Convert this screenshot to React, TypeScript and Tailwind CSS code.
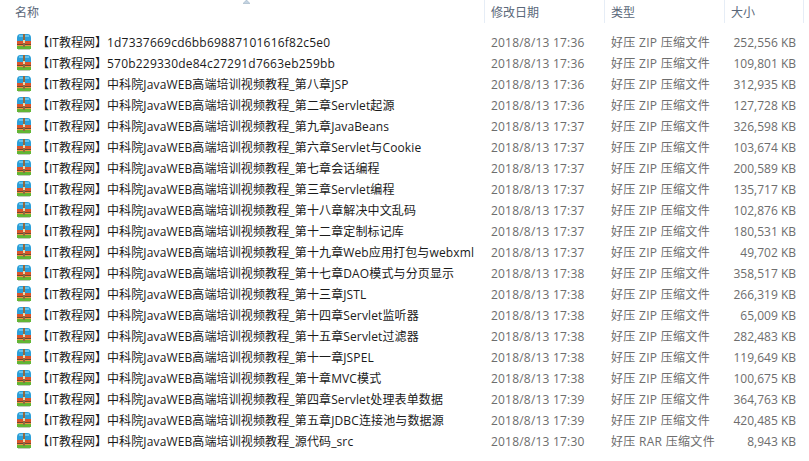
import React from "react";

interface FileRow {
  name: string;
  date: string;
  type: string;
  size: string;
  hash?: boolean;
}

const course = "中科院JavaWEB高端培训视频教程_";
const zip = "好压 ZIP 压缩文件";

const files: FileRow[] = [
  { name: "1d7337669cd6bb69887101616f82c5e0", date: "2018/8/13 17:36", type: zip, size: "252,556 KB", hash: true },
  { name: "570b229330de84c27291d7663eb259bb", date: "2018/8/13 17:36", type: zip, size: "109,801 KB", hash: true },
  { name: course + "第八章JSP", date: "2018/8/13 17:36", type: zip, size: "312,935 KB" },
  { name: course + "第二章Servlet起源", date: "2018/8/13 17:36", type: zip, size: "127,728 KB" },
  { name: course + "第九章JavaBeans", date: "2018/8/13 17:37", type: zip, size: "326,598 KB" },
  { name: course + "第六章Servlet与Cookie", date: "2018/8/13 17:37", type: zip, size: "103,674 KB" },
  { name: course + "第七章会话编程", date: "2018/8/13 17:37", type: zip, size: "200,589 KB" },
  { name: course + "第三章Servlet编程", date: "2018/8/13 17:37", type: zip, size: "135,717 KB" },
  { name: course + "第十八章解决中文乱码", date: "2018/8/13 17:37", type: zip, size: "102,876 KB" },
  { name: course + "第十二章定制标记库", date: "2018/8/13 17:37", type: zip, size: "180,531 KB" },
  { name: course + "第十九章Web应用打包与webxml", date: "2018/8/13 17:37", type: zip, size: "49,702 KB" },
  { name: course + "第十七章DAO模式与分页显示", date: "2018/8/13 17:38", type: zip, size: "358,517 KB" },
  { name: course + "第十三章JSTL", date: "2018/8/13 17:38", type: zip, size: "266,319 KB" },
  { name: course + "第十四章Servlet监听器", date: "2018/8/13 17:38", type: zip, size: "65,009 KB" },
  { name: course + "第十五章Servlet过滤器", date: "2018/8/13 17:38", type: zip, size: "282,483 KB" },
  { name: course + "第十一章JSPEL", date: "2018/8/13 17:38", type: zip, size: "119,649 KB" },
  { name: course + "第十章MVC模式", date: "2018/8/13 17:38", type: zip, size: "100,675 KB" },
  { name: course + "第四章Servlet处理表单数据", date: "2018/8/13 17:39", type: zip, size: "364,763 KB" },
  { name: course + "第五章JDBC连接池与数据源", date: "2018/8/13 17:39", type: zip, size: "420,485 KB" },
  { name: course + "源代码_src", date: "2018/8/13 17:30", type: "好压 RAR 压缩文件", size: "8,943 KB" },
];

const ArchiveIcon = () => (
  <svg width="16" height="16" viewBox="0 0 16 16" className="-mt-px shrink-0">
    {/* top flap */}
    <path d="M1 4 Q1 0 4.5 0 H11.5 Q15 0 15 4 V7 H1 Z" fill="#2b9fd8" />
    <rect x="3" y="1" width="10" height="2" fill="#66c3ec" />
    {/* books */}
    <rect x="1" y="7" width="14" height="3" fill="#d9542b" />
    <rect x="1" y="10" width="14" height="1" fill="#6e4a30" />
    <rect x="1" y="11" width="14" height="1" fill="#ec9340" />
    <rect x="1" y="12" width="14" height="3" fill="#62b534" />
    <rect x="2" y="15" width="12" height="1" fill="#c3cdbd" />
    {/* strap */}
    <rect x="7" y="0" width="2" height="13" fill="#8f6a42" />
    <rect x="7" y="6" width="2" height="3" fill="#e9d9a8" />
  </svg>
);

export default function App() {
  return (
    <div className="relative h-[461px] w-[809px] overflow-hidden bg-white font-['Open_Sans','Noto_Sans_CJK_SC',sans-serif] text-[12px] text-[#6d6d6d]">
      {/* sort arrow */}
      <svg width="7" height="4" viewBox="0 0 7 4" className="absolute left-[243px] top-0">
        <path d="M0 3.5 L3.5 0 L7 3.5 Z" fill="#c3d3e2" stroke="#8fa6bb" strokeWidth="0.5" />
      </svg>

      {/* header */}
      <div className="flex h-[23px] text-[#5a6779]">
        <div className="w-[484px] pl-[15px] leading-[25px]">名称</div>
        <div className="w-[120px] border-l border-[#e6edf6] pl-[6px] leading-[25px]">修改日期</div>
        <div className="w-[120px] border-l border-[#e6edf6] pl-[6px] leading-[25px]">类型</div>
        <div className="w-[80px] border-x border-[#e6edf6] pl-[6px] leading-[25px]">大小</div>
      </div>

      {/* rows */}
      <div className="mt-[9px] flex flex-col">
        {files.map((f) => (
          <div key={f.name} className="flex h-[21px] items-center whitespace-nowrap">
            <div className="flex w-[491px] items-center pl-[16px] text-[#1a1a1a]">
              <ArchiveIcon />
              <span className="ml-[5px]">【IT教程网】</span>
              <span className={f.hash ? "tracking-[0.22px]" : "tracking-[0.13px]"}>{f.name}</span>
            </div>
            <div className="w-[120px] tracking-[0.2px]">{f.date}</div>
            <div className="w-[100px] tracking-[0.3px]">{f.type}</div>
            <div className="w-[85px] text-right">{f.size}</div>
          </div>
        ))}
      </div>
    </div>
  );
}
